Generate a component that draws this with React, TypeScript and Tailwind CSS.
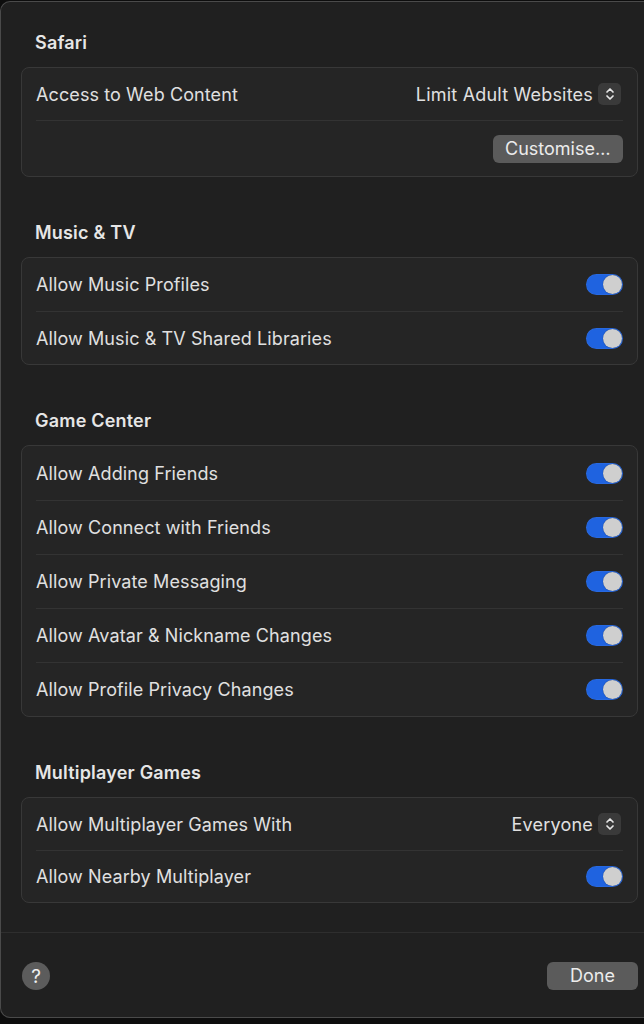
import React from "react";

const font = { fontFamily: "Inter, 'Noto Sans', sans-serif" };

function Toggle() {
  return (
    <div className="w-[37px] h-[21px] rounded-full bg-[#1f63e0] flex items-center justify-end pr-[1px] shadow-[inset_0_0_0_0.5px_rgba(255,255,255,0.08)]">
      <div className="w-[19px] h-[19px] rounded-full bg-[#cfcfcf] shadow-[0_0_1px_rgba(0,0,0,0.5)]" />
    </div>
  );
}

function Stepper() {
  return (
    <div className="w-[23px] h-[22px] rounded-[5px] bg-[#3a3a3a] flex items-center justify-center">
      <svg width="10" height="16" viewBox="0 0 10 16" fill="none" stroke="#e6e6e6" strokeWidth="1.7" strokeLinecap="round" strokeLinejoin="round">
        <path d="M2 6 L5 3 L8 6" />
        <path d="M2 10 L5 13 L8 10" />
      </svg>
    </div>
  );
}

function Row({ label, first, right, h = "h-[53px]" }: { label: string; first?: boolean; right: React.ReactNode; h?: string }) {
  return (
    <div className="px-[14px]">
      <div className={`${h} flex items-center justify-between ${first ? "" : "border-t border-[#333333]"}`}>
        <span className="text-[18px] text-[#e0e0e0] tracking-[0.1px]">{label}</span>
        <div>{right}</div>
      </div>
    </div>
  );
}

function Section({ title, children, first }: { title: string; children: React.ReactNode; first?: boolean }) {
  return (
    <div className={first ? "" : "mt-[44px]"}>
      <div className="pt-[2px] h-[22px] leading-[20px] px-[14px] text-[18px] font-semibold text-[#e6e6e6] tracking-[0.2px]">{title}</div>
      <div className="mt-[14px] rounded-[8px] border border-[#383838] bg-[#252525]">{children}</div>
    </div>
  );
}

export default function App() {
  const gc = [
    "Allow Adding Friends",
    "Allow Connect with Friends",
    "Allow Private Messaging",
    "Allow Avatar & Nickname Changes",
    "Allow Profile Privacy Changes",
  ];
  return (
    <div className="w-[644px] h-[1024px] bg-[#0d0d0d] overflow-hidden pt-[1px]" style={font}>
      <div className="w-[700px] h-[1017px] bg-[#202020] border-t border-l border-b border-[#4a4a4a] rounded-l-[10px] flex flex-col">
        <div className="pl-[20px] w-[637px] pt-[29px]">
          <Section title="Safari" first>
            <div className="px-[14px]">
              <div className="h-[52px] flex items-center justify-between">
                <span className="text-[18px] text-[#e0e0e0] tracking-[0.1px]">Access to Web Content</span>
                <div className="flex items-center gap-[5px] mr-[2px]">
                  <span className="text-[18px] text-[#e0e0e0] tracking-[0.2px]">Limit Adult Websites</span>
                  <Stepper />
                </div>
              </div>
              <div className="h-[56px] border-t border-[#333333] flex items-center justify-end">
                <button className="h-[28px] px-[12.5px] rounded-[6px] bg-[#5b5b5b] text-[18px] text-[#ececec] leading-none">
                  Customise…
                </button>
              </div>
            </div>
          </Section>
          <Section title="Music & TV">
            <Row label="Allow Music Profiles" first right={<Toggle />} />
            <Row label="Allow Music & TV Shared Libraries" right={<Toggle />} />
          </Section>
          <Section title="Game Center">
            {gc.map((l, i) => (
              <Row key={l} label={l} first={i === 0} h="h-[54px]" right={<Toggle />} />
            ))}
          </Section>
          <Section title="Multiplayer Games">
            <Row
              label="Allow Multiplayer Games With"
              first
              h="h-[52px]"
              right={
                <div className="flex items-center gap-[5px] mr-[2px]">
                  <span className="text-[18px] text-[#e0e0e0] tracking-[0.2px]">Everyone</span>
                  <Stepper />
                </div>
              }
            />
            <Row label="Allow Nearby Multiplayer" h="h-[52px]" right={<Toggle />} />
          </Section>
        </div>
        <div className="mt-[29px] border-t border-[#2e2e2e] w-full" />
        <div className="w-[637px] pl-[21px] mt-[29px] flex items-center justify-between">
          <div className="w-[28px] h-[28px] rounded-full bg-[#5c5c5c] flex items-center justify-center text-[19px] text-[#f0f0f0] leading-none">
            ?
          </div>
          <button className="w-[91px] h-[28px] rounded-[6px] bg-[#5b5b5b] text-[18px] text-[#ececec] leading-none">
            Done
          </button>
        </div>
      </div>
    </div>
  );
}
